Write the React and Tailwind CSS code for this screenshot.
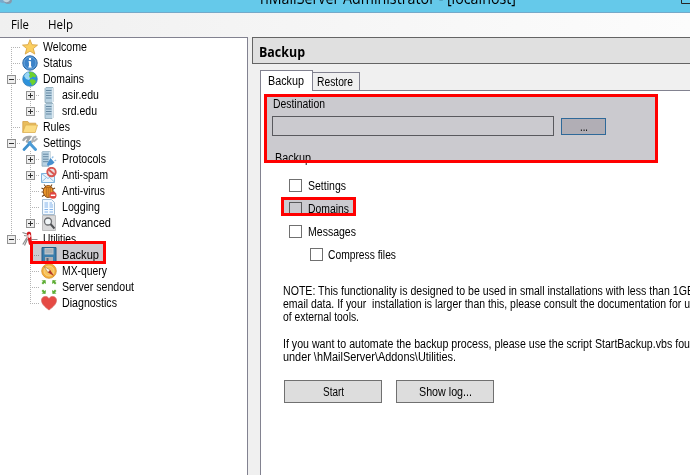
import { useLayoutEffect, useRef } from "react";

const SANS = "font-['Liberation_Sans',Arial,sans-serif]";
const UI = "font-['Open_Sans','Noto_Sans',sans-serif]";

function Fit({ w, size = "text-[12px]", font = SANS, className = "", children }) {
  const ref = useRef(null);
  useLayoutEffect(() => {
    const el = ref.current;
    const apply = () => {
      el.style.transform = "none";
      el.style.transform = `scaleX(${w / el.getBoundingClientRect().width})`;
    };
    apply();
    document.fonts?.ready.then(apply);
  }, [w]);
  return (
    <span className={`block shrink-0 ${size} ${font} ${className}`} style={{ width: w }}>
      <span ref={ref} className="inline-block origin-left whitespace-pre">{children}</span>
    </span>
  );
}

const Server = () => (
  <g>
    <path d="M4 1.5 5 .5h7v14l-1 1H4z" fill="#b9d2e2" stroke="#8ba8ba" strokeWidth=".8" />
    <path d="M5 3.5h5.5M5 6h5.5M5 8.500h5.500M5 11h5.500" stroke="#6689a3" />
    <path d="M11.500 1v14" stroke="#dce9f1" />
  </g>
);

const icons = {
  star: <path d="m8 .7 2 5 5.500.4-4.200 3.500 1.500 5.500L8 12.100l-4.800 3 1.500-5.500L.5 6.100 6 5.700z" fill="#fbcf60" stroke="#d9a545" strokeWidth=".9" />,
  info: (
    <g>
      <circle cx="8" cy="8" r="7.200" fill="#3c83c9" stroke="#2a68a6" />
      <circle cx="8" cy="8" r="6" fill="none" stroke="#76ade0" strokeWidth=".8" />
      <path d="M8 3v2M8 6.300v6" stroke="#fff" strokeWidth="2.100" fill="none" />
      <path d="M6.500 6.800H8M6.300 12h3.500" stroke="#fff" strokeWidth="1" fill="none" />
    </g>
  ),
  globe: (
    <g>
      <circle cx="8" cy="8" r="7.300" fill="#2d92dc" stroke="#3a7cae" strokeWidth=".7" />
      <path d="M2 5a7 7 0 0 1 4-4l2 2-1 2 2 1-2 3-3-1z" fill="#9ad7f5" />
      <path d="M7 1.200c3-.8 6 1 7.300 3.800l-1.500 1.500-2-1-1.800 1.800-2-1.300 1-1.500zM9 8l3 .5 2 1.500c-.6 2-2 3.600-4 4.500l-1-2.500-1.500-1.500z" fill="#6fd22c" />
    </g>
  ),
  server: <Server />,
  folder: (
    <g>
      <path d="M.8 13.500v-11h5l1.500 1.700h6.500v2" fill="#e9bd5c" stroke="#d3a045" strokeWidth=".8" />
      <path d="M.8 13.500 3.500 6h12l-2.300 7.500z" fill="#fbdc83" stroke="#dcae50" strokeWidth=".8" />
    </g>
  ),
  tools: (
    <g fill="none" strokeLinecap="round">
      <path d="m2 14.500 7-7.500" stroke="#3e8fcc" strokeWidth="2.700" />
      <path d="m7 7.500 6.500 7" stroke="#4b9bd6" strokeWidth="2.900" />
      <path d="M1.500 5C2.500 2.800 4.500 1.700 8 2L5 6.500" stroke="#a3a6a8" strokeWidth="2.400" />
      <path d="m10 7 1.500-4.500 2-.7M12 6.200l2.700-2.200" stroke="#b0b3b5" strokeWidth="2.100" />
    </g>
  ),
  protocols: (
    <g>
      <g transform="translate(-3 -.3)"><Server /></g>
      <path d="M7 15c-2-2 0-3 .5-4.500L9.500 7l4 4.500-2.500 2.300c-1 .2-2 0-4 1.200z" fill="#478fce" />
      <path d="M11 7.200l1.300-1.700M13.500 10l1.600-1" stroke="#8fbde4" strokeWidth="1.300" />
    </g>
  ),
  spam: (
    <g>
      <path d="M.5 6.500h13v9H.5z" fill="#eaf5fd" stroke="#7fb3dc" />
      <path d="m.5 15 5-4.500M13.500 15l-5-4.500M.5 6.500l6.500 5 6.500-5" fill="none" stroke="#8dbfe4" />
      <circle cx="10.500" cy="5" r="4.200" fill="#eadede" stroke="#d85550" strokeWidth="1.900" />
      <path d="m7.500 2.500 6 5" stroke="#d85550" strokeWidth="1.900" />
    </g>
  ),
  virus: (
    <g>
      <path d="M3 1.500 5 4M11 1.500 9.500 4M.5 5l3 1.500M.5 9h3M1 13.500l3-2M14 5l-3 1.500M13.500 9H11" stroke="#71461c" strokeWidth="1.100" />
      <ellipse cx="7.200" cy="8.500" rx="4.900" ry="6" fill="#ef9a2e" stroke="#8a4c14" />
      <path d="M3.500 4.500h7.500M5.300 5v8.500M9.200 5v8.500M7.200 5v9" stroke="#a55f1a" strokeWidth=".8" />
      <circle cx="12" cy="12.300" r="3.500" fill="#df4540" />
      <path d="M9.800 12.300h4.400" stroke="#fff" strokeWidth="1.500" />
    </g>
  ),
  log: (
    <g>
      <path d="M1.500.5h9l3 3v12h-12z" fill="#f4faff" stroke="#a5bdd3" />
      <path d="M3.500 4h3.500M3.500 6h3.500M3.500 8h3.500M3.500 10.500h3.500M3.500 13h3.500M8.500 4H11M8.500 6H12M8.500 8H12M8.500 10.500H12M8.500 13H12" stroke="#83b3ec" strokeWidth="1.200" />
    </g>
  ),
  search: (
    <g>
      <path d="M1.500.5h13v15h-13z" fill="#d9d9da" stroke="#bdbdbe" />
      <circle cx="7" cy="6.500" r="3.500" fill="#f1f6f8" stroke="#6b6d70" strokeWidth="1.300" />
      <path d="m9.500 9 4 4.500" stroke="#4f5154" strokeWidth="2" />
    </g>
  ),
  knife: (
    <g>
      <path d="M.5 1.500 5 3M2 4.500 5 5M9.500 8.500h6M.8 13.500l4.200-7M2.500 14.500 5.500 8" stroke="#8d8d8d" strokeWidth="1.200" />
      <path d="M4.800 2.500C4.800.5 8.500 0 9 2.200L10 12c.2 2.500-2.700 3-3.200.8z" fill="#d21d22" />
      <path d="M7.200 3v4M5.200 5h4" stroke="#fff" strokeWidth="1.200" />
    </g>
  ),
  disk: (
    <g>
      <path d="M1 .5h14v15H2.500L1 14z" fill="#4a9fd4" stroke="#2f75a5" />
      <path d="M3.500 1h9v6.500h-9z" fill="#edf5f7" />
      <path d="M4.500 3h7M4.500 5h7" stroke="#b8cfd5" />
      <path d="M4 10h8v5.500H4z" fill="#d8dcdc" />
      <path d="M5.500 11h2v4h-2z" fill="#687f90" />
    </g>
  ),
  compass: (
    <g>
      <circle cx="8" cy="8" r="7.300" fill="#f4af3c" stroke="#d4922f" strokeWidth=".8" />
      <circle cx="8" cy="8" r="5" fill="#f8c35a" stroke="#f7d892" strokeWidth=".8" />
      <path d="M3 3.500 9.200 7 7 9.500z" fill="#fff5e0" stroke="#8f6631" strokeWidth=".5" />
      <path d="m13 13-3.800-6L7 9.500z" fill="#b0352a" />
    </g>
  ),
  sendout: (
    <g fill="#5eae35">
      <path d="m.5 1.500 4-.5.5 4-1.500-1L2 5.500.5 4 2 2.800zM15.500 1.500l-4-.5-.5 4 1.500-1L14 5.500 15.500 4 14 2.800zM.5 14.500l4 .5.500-4-1.500 1L2 10.500.5 12 2 13.200zM15.500 14.500l-4 .5-.5-4 1.500 1 1.500-1.500 1.500 1.500-1.500 1.200z" />
    </g>
  ),
  heart: <path d="M8 15C4 12 .5 9 .5 5.300.5 1.200 5.800 0 8 3.500 10.200 0 15.500 1.200 15.500 5.300 15.500 9 12 12 8 15z" fill="#e54a44" stroke="#d36560" strokeWidth=".7" />,
};

const rows = [
  [0, "Welcome", "star", 44, "", "first"],
  [0, "Status", "info", 29],
  [0, "Domains", "globe", 41, "-"],
  [1, "asir.edu", "server", 37, "+"],
  [1, "srd.edu", "server", 35, "+", "end"],
  [0, "Rules", "folder", 27],
  [0, "Settings", "tools", 38, "-"],
  [1, "Protocols", "protocols", 44, "+"],
  [1, "Anti-spam", "spam", 46, "+"],
  [1, "Anti-virus", "virus", 43],
  [1, "Logging", "log", 38],
  [1, "Advanced", "search", 49, "+", "end"],
  [0, "Utilities", "knife", 33, "-", "last"],
  [1, "Backup", "disk", 37, "", "tail"],
  [1, "MX-query", "compass", 45, "", "tail"],
  [1, "Server sendout", "sendout", 72, "", "tail"],
  [1, "Diagnostics", "heart", 55, "", "tailend"],
];

function TreeRow({ row }) {
  const [level, label, icon, w, sign, pos = ""] = row;
  const cx = level ? 30.5 : 11.5;
  const gutter = level ? 41 : 22;
  const ends = pos === "end" || pos === "last" || pos === "tailend";
  const dots = { stroke: "#b4b4b4", strokeDasharray: "1 1", fill: "none" };
  return (
    <div className="flex h-4 items-center">
      <svg className="shrink-0" width={gutter} height="16">
        {level === 1 && !pos.startsWith("tail") && <path d="M11.5 0V16" {...dots} />}
        <path d={`M${cx} ${pos === "first" ? 8 : 0}V${ends ? 8 : 16}`} {...dots} />
        <path d={`M${cx - 0.5} 8.5H${gutter - 1}`} {...dots} />
        {sign && (
          <g>
            <rect x={cx - 4} y="4.5" width="8" height="8" fill="#eeeeee" stroke="#919191" />
            <path d={`M${cx - 2.5} 8.5h5`} stroke="#303030" />
            {sign === "+" && <path d={`M${cx} 6v5`} stroke="#303030" />}
          </g>
        )}
      </svg>
      <svg className="mr-[5px] shrink-0" width="16" height="16" viewBox="0 0 16 16">{icons[icon]}</svg>
      <Fit w={w} className="leading-4">{label}</Fit>
    </div>
  );
}

function Check({ label, w, className = "" }) {
  return (
    <div className={`flex h-[13px] items-center ${className}`}>
      <span className="mr-[6px] size-[13px] shrink-0 border border-[#707070] bg-white" />
      <Fit w={w} className="pt-[2px] leading-[15px]">{label}</Fit>
    </div>
  );
}

const Marker = ({ className }) => (
  <div className={`absolute ${className}`}>
    <div className="absolute inset-0 bg-[#cbcacf] mix-blend-multiply" />
    <div className="absolute inset-0 border-3 border-[#ff0000]" />
  </div>
);

export default function App() {
  return (
    <div className="relative isolate flex h-[475px] w-[690px] flex-col overflow-hidden bg-[#f0f0f0] text-black">
      <header className="flex h-[13px] shrink-0 items-start overflow-hidden border-b border-[#75a9c9] bg-[#65c9ea]">
        <svg width="260" height="12" className="shrink-0">
          <ellipse cx="3" cy="0" rx="4" ry="3" fill="#78aacd" />
          <ellipse cx="8" cy="0" rx="4" ry="4" fill="#8599ad" />
          <path d="M3 0c2 3 5 3 7 0" fill="#c0d4df" />
        </svg>
        <Fit w={256} size="text-[16px]" font={UI} className="-mt-[13px] leading-[22px]">hMailServer Administrator - [localhost]</Fit>
        <svg width="9" height="12" className="ml-auto shrink-0"><path d="M.5 0V3.500H9" fill="none" stroke="#262626" /></svg>
      </header>
      <nav className="flex h-6 shrink-0 items-center bg-linear-to-r from-[#f0f0f0] to-[#fcfcfc] pl-[11px]">
        <Fit w={18} font={UI} className="mr-[19px]">File</Fit>
        <Fit w={25} font={UI}>Help</Fit>
      </nav>
      <div className="flex min-h-0 flex-1">
        <aside className="w-[248px] shrink-0 border-t border-r border-[#828290] bg-white pt-px">
          {rows.map((r) => <TreeRow key={r[1]} row={r} />)}
        </aside>
        <main className="ml-1 flex min-w-0 flex-1 flex-col">
          <div className="flex h-[27px] shrink-0 items-center border border-r-0 border-[#646464] bg-[#e0e0e0] pl-[6px]">
            <Fit w={46} size="text-[14px]" font={UI} className="pt-px font-bold">Backup</Fit>
          </div>
          <div className="ml-2 flex h-[26px] shrink-0 items-end pt-[6px]">
            <div className="z-10 -mb-px flex h-[21px] w-[53px] shrink-0 items-center border border-b-0 border-[#828290] bg-white pl-[7px]">
              <Fit w={36} className="-mt-px">Backup</Fit>
            </div>
            <div className="flex h-[18px] w-[47px] shrink-0 items-center border border-b-0 border-l-0 border-[#828290] pl-1">
              <Fit w={36}>Restore</Fit>
            </div>
          </div>
          <section className="ml-2 flex min-h-0 flex-1 flex-col overflow-hidden border-t border-l border-[#828290] bg-white">
            <Fit w={52} className="mt-[6px] ml-3 leading-[14px]">Destination</Fit>
            <div className="mt-[5px] ml-[11px] flex h-5 items-center gap-[7px]">
              <span className="h-5 w-[282px] border border-[#707074]" />
              <span className="flex h-[17px] w-[45px] justify-center border border-[#3b85bd] bg-[#dedcdf]">
                <Fit w={8} className="leading-[16px]">...</Fit>
              </span>
            </div>
            <Fit w={36} className="mt-[15px] ml-[14px] leading-[14px]">Backup</Fit>
            <div className="mt-[14px] ml-7 flex flex-col gap-[10px]">
              <Check label="Settings" w={38} />
              <Check label="Domains" w={41} />
              <Check label="Messages" w={48} />
              <Check label="Compress files" w={68} className="ml-[21px] [&>span:first-child]:mr-[5px]" />
            </div>
            <div className="mt-6 ml-[22px] flex flex-col">
              <Fit w={411} className="leading-[13px]">NOTE: This functionality is designed to be used in small installations with less than 1GB</Fit>
              <Fit w={407} className="leading-[13px]">{"email data. If your  installation is larger than this, please consult the documentation for u"}</Fit>
              <Fit w={76} className="leading-[13px]">of external tools.</Fit>
              <Fit w={407} className="mt-[14px] leading-[13px]">If you want to automate the backup process, please use the script StartBackup.vbs fou</Fit>
              <Fit w={173} className="leading-[13px]">under \hMailServer\Addons\Utilities.</Fit>
            </div>
            <div className="mt-4 ml-[23px] flex gap-[14px]">
              <span className="flex h-[23px] w-[98px] items-center justify-center border border-[#707070] bg-[#dddddd]"><Fit w={21}>Start</Fit></span>
              <span className="flex h-[23px] w-[98px] items-center justify-center border border-[#707070] bg-[#dddddd]"><Fit w={53}>Show log...</Fit></span>
            </div>
          </section>
        </main>
      </div>
      <Marker className="top-[241px] left-[30px] h-[23px] w-[76px]" />
      <Marker className="top-[94px] left-[264px] h-[69px] w-[394px]" />
      <Marker className="top-[197px] left-[281px] h-[19px] w-[75px]" />
    </div>
  );
}
